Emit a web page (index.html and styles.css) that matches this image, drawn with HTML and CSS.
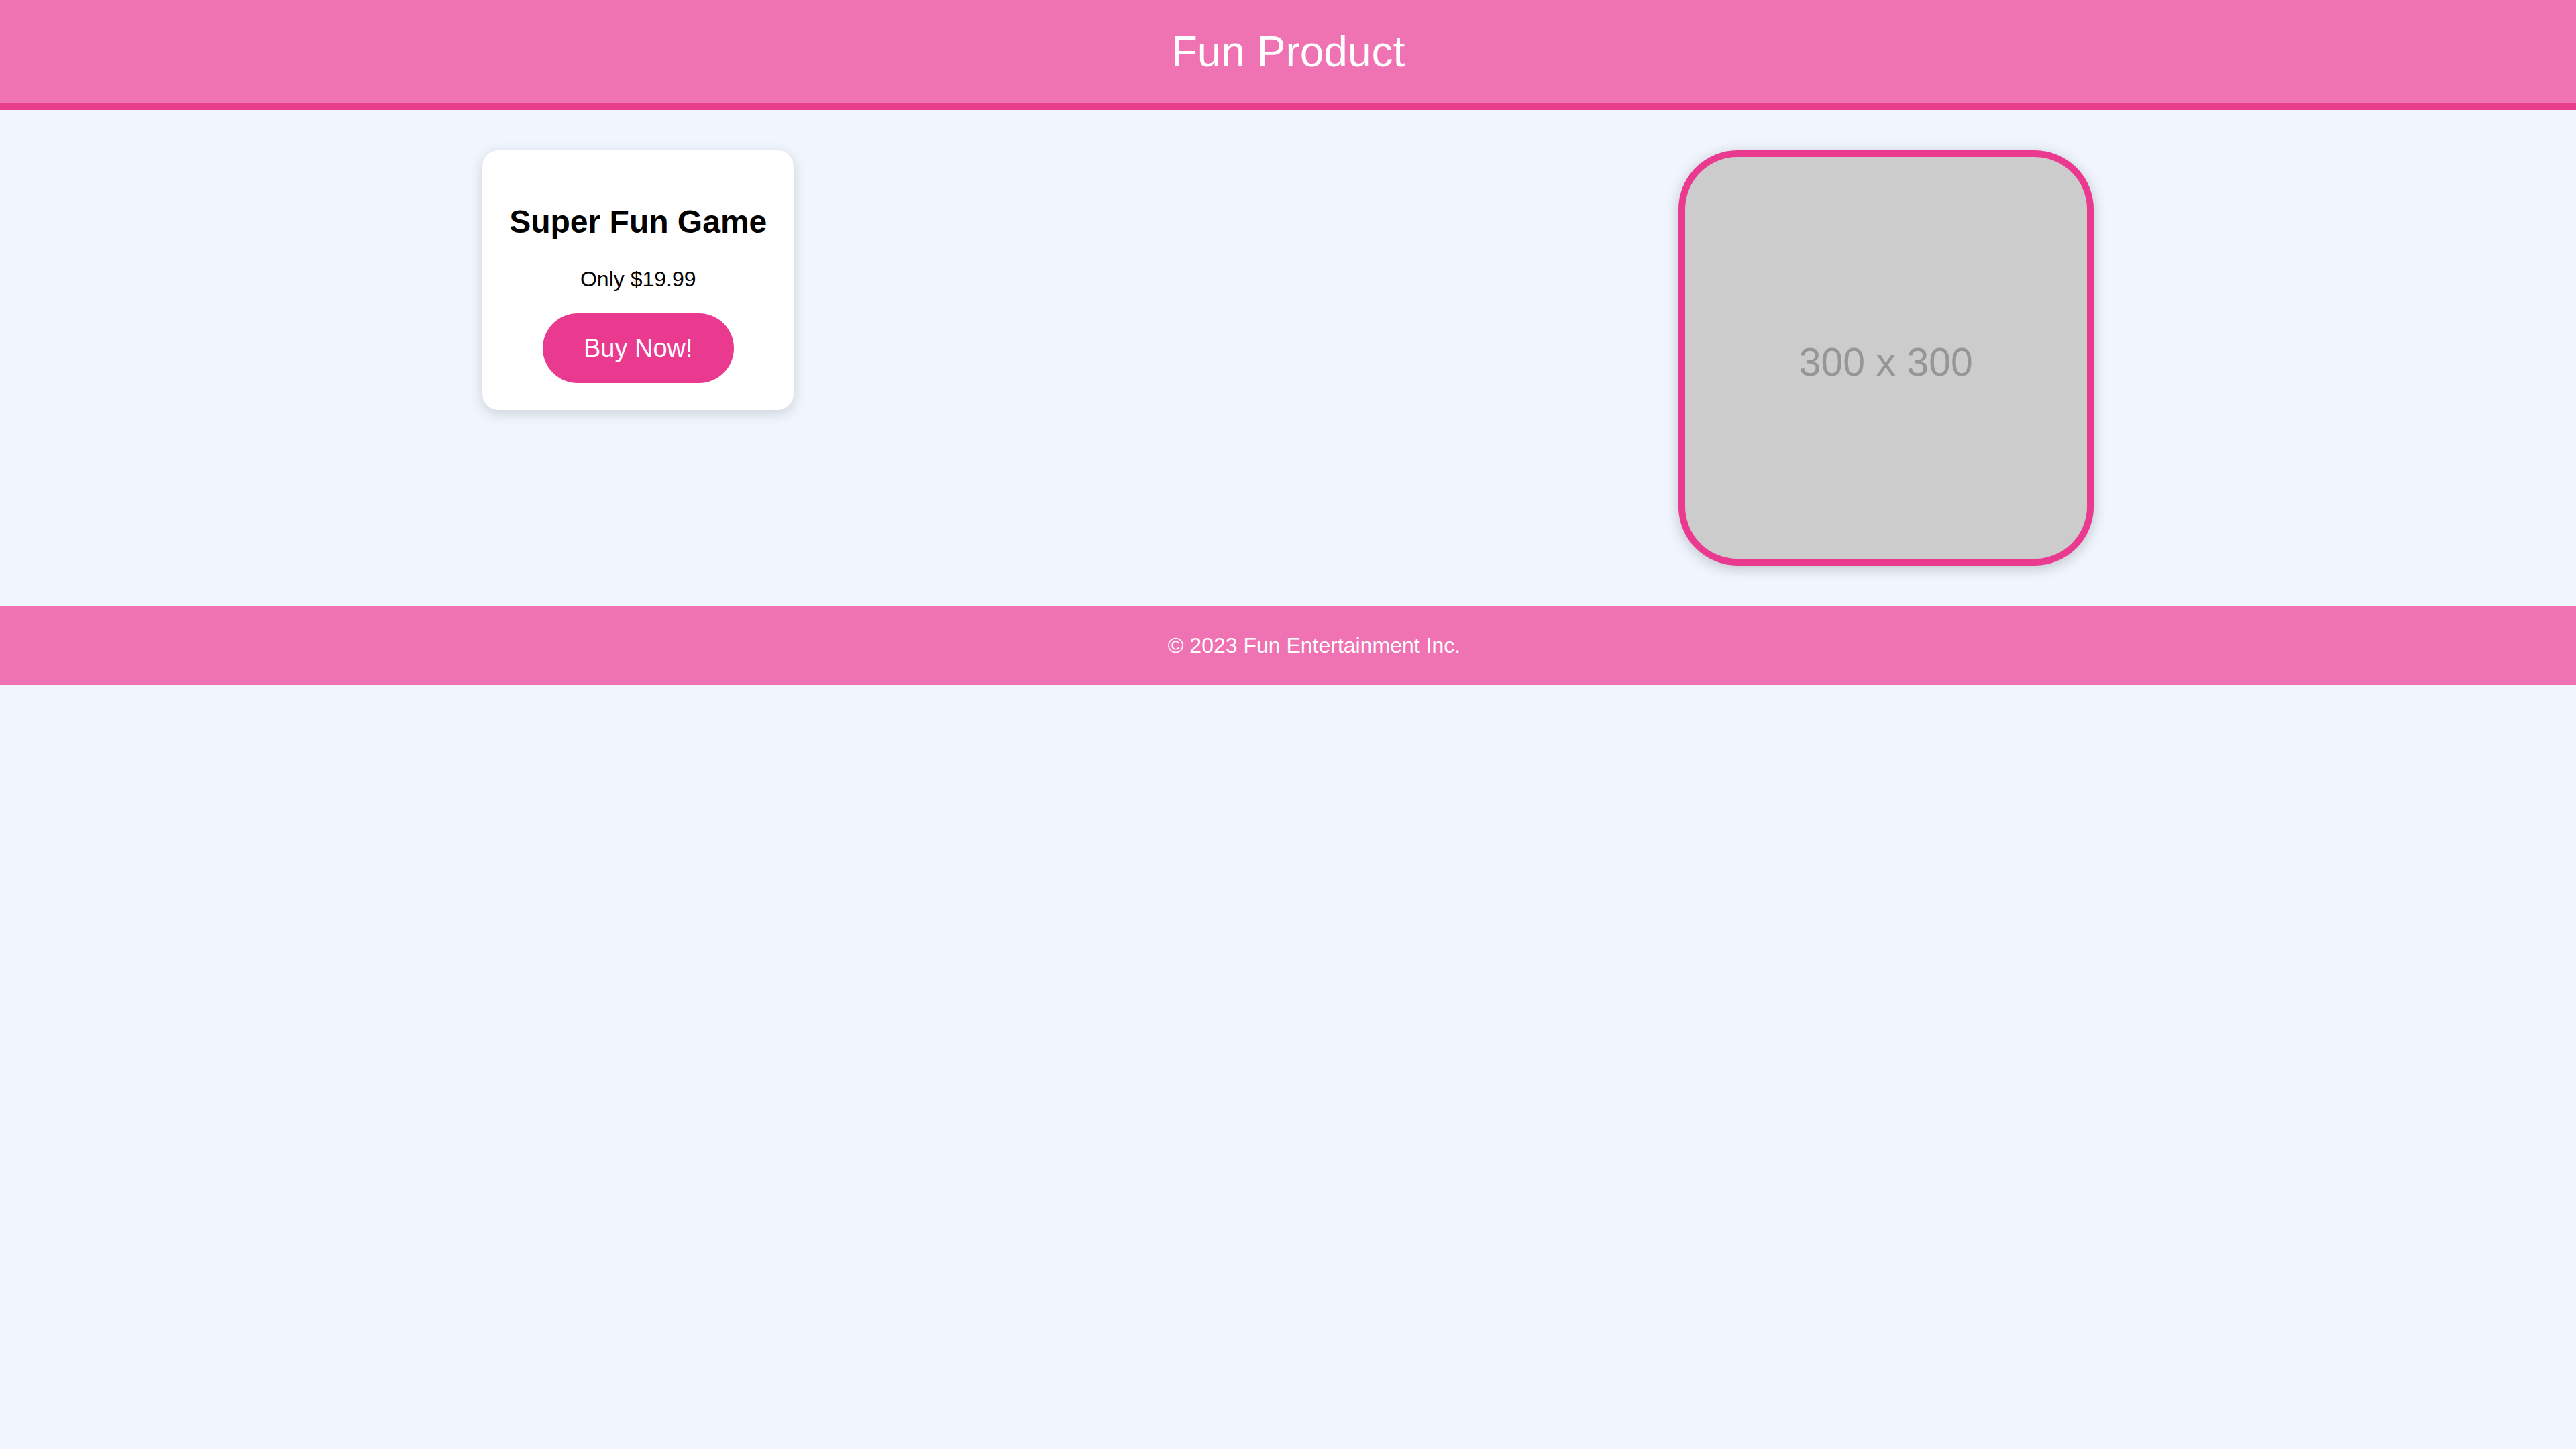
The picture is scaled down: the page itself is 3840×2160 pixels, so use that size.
FILE: index.html
```html
<!DOCTYPE html>
<html lang="en">
<head>
<meta charset="utf-8">
<title>Fun Product</title>
<link rel="stylesheet" href="styles.css">
</head>
<body>
<header class="site-header">
  <h1 class="site-title">Fun Product</h1>
</header>
<main class="showcase">
  <section class="product-card">
    <h3 class="product-name">Super Fun Game</h3>
    <p class="product-price">Only $19.99</p>
    <button class="buy-button">Buy Now!</button>
  </section>
  <div class="product-image"><span class="placeholder-text">300 x 300</span></div>
</main>
<footer class="site-footer">
  <p class="footer-text">© 2023 Fun Entertainment Inc.</p>
</footer>
</body>
</html>
```
FILE: styles.css
```css
html, body {
  margin: 0;
  padding: 0;
}
body {
  background: #f1f6fe;
  font-family: "Liberation Sans", Arial, sans-serif;
  color: #000;
}
.site-header {
  background: #ef73b3;
  border-bottom: 10px solid #e83e8c;
  padding: 40px 0;
  text-align: center;
}
.site-title {
  margin: 0;
  font-size: 64px;
  line-height: 74px;
  font-weight: normal;
  color: #fff;
}
.showcase {
  display: flex;
  justify-content: space-around;
  align-items: flex-start;
  padding: 60px 60px 61px;
}
.product-card {
  box-sizing: border-box;
  width: 464px;
  background: #fff;
  border-radius: 24px;
  box-shadow: 0 5px 20px rgba(0, 0, 0, 0.16);
  padding: 79px 0 40px;
  display: flex;
  flex-direction: column;
  align-items: center;
  text-align: center;
}
.product-name {
  margin: 0;
  font-size: 48px;
  line-height: 56px;
  font-weight: bold;
}
.product-price {
  margin: 39px 0 0;
  font-size: 32px;
  line-height: 37px;
}
.buy-button {
  margin-top: 32px;
  border: none;
  background: #e93a8f;
  color: #fff;
  font-family: inherit;
  font-size: 38px;
  line-height: 44px;
  padding: 30px 61px;
  border-radius: 60px;
}
.product-image {
  box-sizing: border-box;
  width: 619px;
  height: 619px;
  border: 10px solid #e93a8f;
  border-radius: 88px;
  background: #cccccc;
  box-shadow: 0 4px 20px rgba(0, 0, 0, 0.22);
  display: flex;
  align-items: center;
  justify-content: center;
  padding-top: 13px;
}
.placeholder-text {
  font-size: 59px;
  line-height: 68px;
  color: #969696;
}
.site-footer {
  background: #ef73b3;
  padding: 40px 0 40px 78px;
  text-align: center;
}
.footer-text {
  margin: 0;
  font-size: 32px;
  line-height: 37px;
  color: #fff;
}
```
